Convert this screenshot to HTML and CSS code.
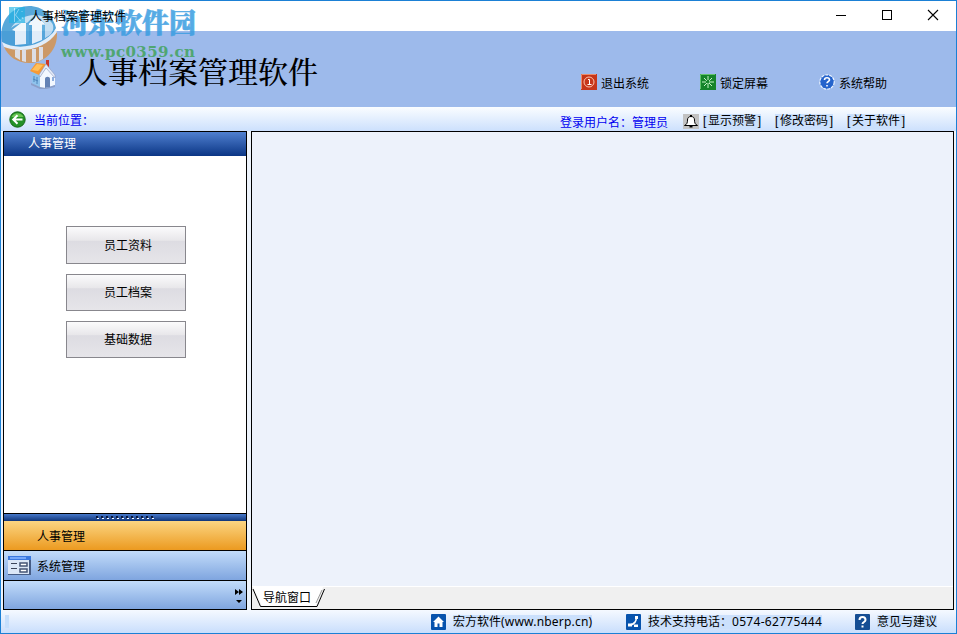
FILE: index.html
```html
<!DOCTYPE html>
<html lang="zh-CN">
<head>
    <meta charset="UTF-8">
    <meta name="viewport" content="width=device-width, initial-scale=1.0">
    <title>人事档案管理软件</title>
    <link rel="stylesheet" href="styles.css">
</head>
<body>
    <div class="window">
        <div class="titlebar">
            <svg class="app-icon" width="16" height="16" viewBox="0 0 16 16">
                <rect width="16" height="16" fill="#1fb4e6"/>
                <path d="M5.500 1v14M10 2L6.500 8l5 6M13 4v1M13 10l1 2" stroke="#a5e6fb" fill="none"/>
            </svg>
            <span class="title-text">人事档案管理软件</span>
            <div class="window-buttons">
                <svg width="12" height="12" viewBox="0 0 12 12"><path d="M1 6.500h10" stroke="#000"/></svg>
                <svg width="12" height="12" viewBox="0 0 12 12"><rect x="1.500" y="1.500" width="9" height="9" fill="none" stroke="#000"/></svg>
                <svg width="12" height="12" viewBox="0 0 12 12"><path d="M1 1l10 10M11 1L1 11" stroke="#000" stroke-width="1.100"/></svg>
            </div>
        </div>

        <header class="banner">
            <svg class="house" width="28" height="30" viewBox="0 0 28 30">
                <path d="M3 12l8 3v14l-8-5z" fill="#8fc3ec"/>
                <path d="M11 17l7-9 8 10v8l-9 3h-6z" fill="#f3f8ff"/>
                <path d="M11 28l6 1 9-3v2l-9 2h-6l-9-4v-2z" fill="#8b9fc9"/>
                <path d="M16 20c0-3 5-3 5 0v8l-5 1z" fill="#6482b5"/>
                <path d="M23 18h2v4h-2z" fill="#8eaede"/>
                <path d="M17 1h3v8l-3-3z" fill="#c9392c"/>
                <path d="M1 12L7 4l10 1-7 11z" fill="#f79a35"/>
                <path d="M3 11l5-6 6 1-5 6z" fill="#ffc05a"/>
                <path d="M10 16l7-11 9 11v3l-9-10-6 9z" fill="#e4ebf8" stroke="#8999bf" stroke-width=".6"/>
                <path d="M5 17v6M8 18v7M4 20l5 2" stroke="#4f86bd"/>
            </svg>
            <h1>人事档案管理软件</h1>
            <nav class="banner-links">
                <a>
                    <svg width="16" height="16" viewBox="0 0 16 16">
                        <rect width="16" height="16" fill="#c6361a"/>
                        <path d="M.5 15V.5H15" stroke="#ed8c6a" fill="none"/>
                        <circle cx="8" cy="8" r="5" fill="none" stroke="#ffc3aa"/>
                        <path d="M7 5.500h1.500v5M6.500 10.500h4" stroke="#fff" fill="none"/>
                    </svg>
                    退出系统
                </a>
                <a>
                    <svg width="16" height="16" viewBox="0 0 16 16">
                        <rect width="16" height="16" fill="#15842b"/>
                        <path d="M.5 15V.5H15" stroke="#61c36b" fill="none"/>
                        <path d="M8 2v12M2 8h12M4 4l8 8M12 4l-8 8" stroke="#c6f5c7" stroke-dasharray="4 3 5"/>
                    </svg>
                    锁定屏幕
                </a>
                <a>
                    <svg width="16" height="16" viewBox="0 0 16 16">
                        <circle cx="8" cy="8" r="7.200" fill="#2463cc" stroke="#edf5ff" stroke-width="1.200" stroke-dasharray="3 1"/>
                        <path d="M5.500 6c0-3 5-3 5 0 0 1.500-2.500 1.500-2.500 3.300M8 11v1.500" stroke="#fff" stroke-width="1.600" fill="none"/>
                    </svg>
                    系统帮助
                </a>
            </nav>
        </header>

        <div class="location-bar">
            <svg width="17" height="17" viewBox="0 0 17 17">
                <circle cx="8.500" cy="8.500" r="7.700" fill="#239126" stroke="#146717"/>
                <path d="M2.500 6c2-5 10-5 12 0z" fill="#68c453"/>
                <path d="M13.500 8.500H4.500M8.500 4.200l-4.300 4.300 4.300 4.300" stroke="#fff" stroke-width="2" fill="none"/>
            </svg>
            <span class="location">当前位置：</span>
            <div class="user-tools">
                <span class="user">登录用户名：管理员</span>
                <span class="bell">
                    <svg width="16" height="15" viewBox="0 0 16 15">
                        <path d="M1.500 11.500c2.500-1 3-3 3-5.500 0-2 1-3.500 3.500-3.500S11.500 4 11.500 6c0 2.500.5 4.500 3 5.500z" fill="#fff" stroke="#000"/>
                        <path d="M7 1h2v2H7zM6.500 12h3v1.500h-3z"/>
                    </svg>
                </span>
                <a><i>[</i>显示预警<i>]</i></a>
                <a><i>[</i>修改密码<i>]</i></a>
                <a><i>[</i>关于软件<i>]</i></a>
            </div>
        </div>

        <main class="workspace">
            <aside class="sidebar">
                <div class="sidebar-title">人事管理</div>
                <div class="sidebar-body">
                    <button class="first">员工资料</button>
                    <button>员工档案</button>
                    <button>基础数据</button>
                </div>
                <div class="splitter">
                    <svg width="60" height="4" viewBox="0 0 60 4">
                        <path d="M1 1h58" stroke="#09173b" stroke-width="2" stroke-dasharray="2 3"/>
                        <path d="M2 2.500h57" stroke="#fff" stroke-dasharray="2 3"/>
                    </svg>
                </div>
                <div class="group active">人事管理</div>
                <div class="group">
                    <svg width="23" height="19" viewBox="0 0 23 19">
                        <path d="M0 0h23v19H0z" fill="#465c85"/>
                        <path d="M0 0h21v18H0z" fill="#dce7f7"/>
                        <path d="M0 0h23v4H0z" fill="#3978df"/>
                        <path d="M2 1h16v2H2z" fill="#75a8fa"/>
                        <path d="M3 7.500h6M3 12.500h6" stroke="#3d455a"/>
                        <path d="M12 7h7v3h-7zM12 13h7v3h-7z" fill="#fff" stroke="#465576" stroke-width="1.500"/>
                    </svg>
                    系统管理
                </div>
                <div class="overflow">
                    <svg width="8" height="16" viewBox="0 0 8 16">
                        <path d="M0 0l4 3-4 3zM4 0l4 3-4 3zM1 11h6l-3 3z"/>
                    </svg>
                </div>
            </aside>
            <section class="content">
                <div class="canvas"></div>
                <div class="tabs">
                    <svg width="10" height="20" viewBox="0 0 10 20"><path d="M1 0h9v19z" fill="#fff"/><path d="M1 2l7.500 17.500H10" stroke="#000" fill="none"/></svg>
                    <span class="tab">导航窗口</span>
                    <svg width="12" height="20" viewBox="0 0 12 20"><path d="M0 0h9L2 19H0z" fill="#fff"/><path d="M2 16L8 3" stroke="#999"/><path d="M0 19.500h3L10.500 2" stroke="#000" fill="none"/></svg>
                </div>
            </section>
        </main>

        <footer class="statusbar">
            <span class="grip"></span>
            <a class="company">
                <svg width="15" height="16" viewBox="0 0 15 16"><rect width="15" height="16" rx="1" fill="#0753ad"/><path d="M7.500 2.500L2 8h1.500v5h3V9.500h2V13h3V8H13z" fill="#fff"/></svg>
                <span>宏方软件<b>(www.nberp.cn)</b></span>
            </a>
            <a class="phone">
                <svg width="15" height="16" viewBox="0 0 15 16"><rect width="15" height="16" rx="1" fill="#0753ad"/><path d="M10 3.500c1 3.500-2 7-6 7.500" stroke="#fff" stroke-width="1.600" fill="none"/><path d="M9 2h3v3H9zM2 9.500h4v3H2zM8 11l1-1 1 1 1-1 1 1v2H8z" fill="#fff"/></svg>
                <span>技术支持电话：<b>0574-62775444</b></span>
            </a>
            <a class="feedback">
                <svg width="15" height="16" viewBox="0 0 15 16"><rect width="15" height="16" rx="1" fill="#154e94"/><path d="M4.500 6c0-4 6-4 6 0 0 2-3 2-3 4M7.500 11.500v2" stroke="#fff" stroke-width="2" fill="none"/></svg>
                <span>意见与建议</span>
            </a>
        </footer>

        <div class="watermark">
            <svg width="56" height="57" viewBox="0 0 56 57">
                <path d="M1 36C-3 14 12 0 28 0c13 0 24 9 27 22-6 14-22 20-38 19-6 0-11-1-16-5z" fill="#3c9ad4"/>
                <path d="M44 18l-9-10-9 9c-5-1-11 1-16 5C18 9 39 3 51 17c2 3 2 8-2 12l-8 5V18z" fill="#dcebf7" opacity=".8"/>
                <path d="M11 24l9-7h5v21l-11 1V25z" fill="#eef6fc"/>
                <path d="M27 19l8-10 9 9h-3v16l-10 4V19z" fill="#eef6fc"/>
                <path d="M25 18h3v20h-3zM41 19h3v14l-3 2z" fill="#4aa3d9"/>
                <path d="M1 36c15 9 41 5 54-13 1 3 1 4 1 7-10 15-38 22-53 11z" fill="#eef6fc"/>
                <path d="M3 41c18 7 42 2 53-15 1 17-11 31-28 31C16 57 7 50 3 41z" fill="#d59450"/>
                <path d="M14 44h5v10l-5-3zM21 44h4v12l-4-1zM31 43h4v13h-4zM38 41h4v12l-4 2z" fill="#e9e5e4"/>
            </svg>
            <div class="watermark-text">
                <strong>河东软件园</strong>
                <span>www.pc0359.cn</span>
            </div>
        </div>
    </div>
</body>
</html>
```
FILE: styles.css
```css
* {
    box-sizing: border-box;
}
body {
    margin: 0;
    font: 12px "Liberation Sans", "Noto Sans CJK SC", sans-serif;
    color: #000;
}
svg {
    display: block;
    flex: none;
}
.window {
    position: relative;
    width: 957px;
    height: 634px;
    border: 1px solid #1b80d5;
    display: flex;
    flex-direction: column;
    background: #edf3fb;
    overflow: hidden;
    white-space: nowrap;
}
.titlebar {
    height: 30px;
    flex: none;
    background: #fff;
    display: flex;
    align-items: center;
    padding: 0 17px 2px 8px;
}
.app-icon,
.title-text {
    z-index: 2;
}
.app-icon {
    opacity: .65;
}
.title-text {
    margin-left: 5px;
}
.window-buttons {
    display: flex;
    gap: 34px;
    margin-left: auto;
}
.banner {
    height: 76px;
    flex: none;
    background: #9dbaeb;
    display: flex;
    padding-left: 28px;
}
.house {
    margin-top: 28px;
}
.banner h1 {
    margin: 20px 0 0 21px;
    width: 246px;
    z-index: 2;
    font: 500 30px/44px "Liberation Serif", "Noto Serif CJK SC", "Noto Sans CJK SC", serif;
}
.banner-links {
    display: flex;
    gap: 50px;
    margin-left: 257px;
    padding-top: 43px;
}
.banner-links a {
    display: flex;
    align-items: center;
    gap: 4px;
    height: 16px;
    width: 69px;
}
.location-bar {
    height: 24px;
    flex: none;
    display: flex;
    align-items: center;
    padding-left: 8px;
    background: linear-gradient(#fafdff, #cce0fd);
}
.location {
    color: #0000f0;
    margin-left: 8px;
}
.user-tools {
    margin-left: auto;
    padding: 4px 51px 0 0;
    display: flex;
    align-items: center;
}
.user {
    color: #0000f0;
    margin-right: 15px;
}
.bell {
    background: #c2c2c2;
    margin-right: 4px;
}
.user-tools a {
    width: 58px;
    margin-right: 14px;
    background: #cbe0fc;
    line-height: 15px;
    display: flex;
    justify-content: space-between;
}
.user-tools a:last-child {
    margin-right: 0;
}
.user-tools i {
    font-style: normal;
}
.workspace {
    height: 479px;
    flex: none;
    display: flex;
    gap: 4px;
    padding: 0 2px;
}
.sidebar {
    width: 244px;
    border: 1px solid #000;
    background: #fff;
    display: flex;
    flex-direction: column;
}
.sidebar-title {
    height: 24px;
    color: #fff;
    line-height: 25px;
    padding-left: 24px;
    background: linear-gradient(#5080d0, #0b3685);
}
.sidebar-body {
    flex: 1;
    display: flex;
    flex-direction: column;
    gap: 10px;
    padding: 70px 0 0 62px;
}
.sidebar-body button {
    width: 120px;
    height: 37px;
    border: 1px solid #88878d;
    padding: 0 0 2px 4px;
    background: linear-gradient(#fbfbfc, #e8e7ea 37%, #dddce2 39%, #e6e5e9);
    font: inherit;
    color: #000;
}
.sidebar-body .first {
    height: 38px;
}
.splitter {
    height: 8px;
    border-top: 1px solid #000;
    background: linear-gradient(#4779cb, #103579);
    display: flex;
    justify-content: center;
    padding-top: 2px;
}
.group {
    height: 30px;
    border-bottom: 1px solid #000;
    display: flex;
    align-items: center;
    gap: 6px;
    padding-left: 4px;
    background: linear-gradient(#c2dcfa, #7fa5df);
}
.group.active {
    padding-left: 33px;
    background: linear-gradient(#fbd582, #ec9a20);
}
.overflow {
    height: 28px;
    display: flex;
    justify-content: flex-end;
    padding: 8px 3px 0 0;
    background: linear-gradient(#c2dcfa, #7fa5df);
}
.content {
    flex: 1;
    border: 1px solid #000;
    display: flex;
    flex-direction: column;
}
.canvas {
    flex: 1;
    background: #edf2fb;
    border-bottom: 1px solid #fff;
}
.tabs {
    height: 22px;
    background: #f0f0f0;
    display: flex;
}
.tab {
    height: 20px;
    line-height: 23px;
    width: 52px;
    padding-left: 1px;
    background: #fff;
    border-bottom: 1px solid #000;
}
.statusbar {
    flex: 1;
    display: flex;
    align-items: center;
    background: linear-gradient(#f5f9ff, #c9defc);
}
.grip {
    width: 4px;
    height: 13px;
    margin-left: 4px;
    background: #c6dffc;
}
.statusbar a {
    display: flex;
    align-items: center;
    gap: 7px;
}
.statusbar a span {
    background: #cbe0fc;
    line-height: 14px;
}
.statusbar b {
    font: 12px "Noto Sans", sans-serif;
    line-height: 14px;
}
.company b {
    letter-spacing: .2px;
}
.phone b {
    letter-spacing: .3px;
}
.company {
    margin-left: 422px;
    width: 195px;
}
.phone {
    width: 229px;
}
.watermark {
    position: absolute;
    left: 0;
    top: 5px;
    display: flex;
    opacity: .85;
}
.watermark-text {
    display: flex;
    flex-direction: column;
    margin-left: 4px;
}
.watermark strong {
    font: 900 27px/36px "Liberation Serif", "Noto Serif CJK SC", "Noto Sans CJK SC", serif;
    color: #399de1;
    -webkit-text-stroke: .6px #399de1;
}
.watermark-text span {
    font: bold 15px/20px "DejaVu Serif", serif;
    letter-spacing: .4px;
    color: #43a35d;
}
```
